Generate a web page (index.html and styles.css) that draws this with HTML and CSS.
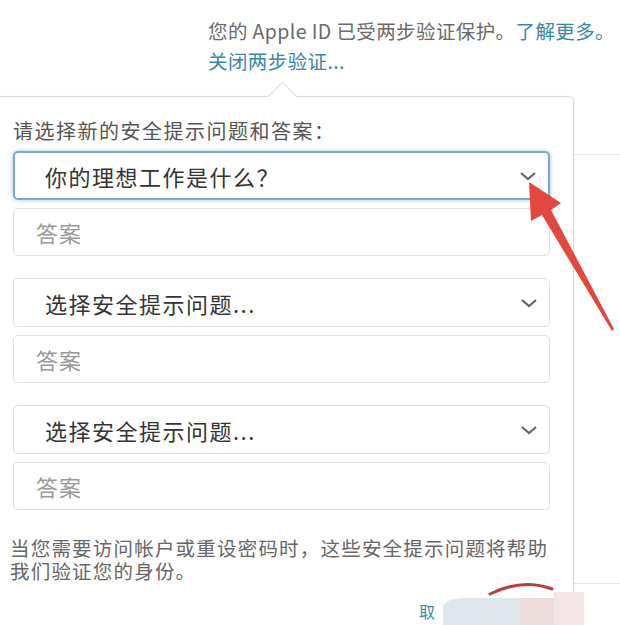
FILE: index.html
```html
<!DOCTYPE HTML>
<html>
<head>
  <title>Apple ID 安全提示问题</title>
  <meta name="viewport" content="width=device-width, initial-scale=1">
  <link rel="stylesheet" href="styles.css">
</head>
<body>
  <div class="page">
    <div class="intro">
      <p>您的 Apple ID 已受两步验证保护。<a href="#">了解更多。</a></p>
      <p><a href="#">关闭两步验证...</a></p>
    </div>

    <div class="layout">
      <div class="popover">
        <h3 class="popover-title">请选择新的安全提示问题和答案：</h3>

        <div class="question-group">
          <div class="select focused">
            <span>你的理想工作是什么？</span>
            <svg class="chevron" viewBox="0 0 18 10"><path d="M2 2l7 6 7-6"/></svg>
          </div>
          <div class="answer">答案</div>
        </div>

        <div class="question-group">
          <div class="select">
            <span>选择安全提示问题...</span>
            <svg class="chevron" viewBox="0 0 18 10"><path d="M2 2l7 6 7-6"/></svg>
          </div>
          <div class="answer">答案</div>
        </div>

        <div class="question-group">
          <div class="select">
            <span>选择安全提示问题...</span>
            <svg class="chevron" viewBox="0 0 18 10"><path d="M2 2l7 6 7-6"/></svg>
          </div>
          <div class="answer">答案</div>
        </div>

        <p class="hint">当您需要访问帐户或重设密码时，这些安全提示问题将帮助我们验证您的身份。</p>

        <div class="actions">
          <a href="#" class="cancel">取</a>
        </div>
      </div>
      <div class="aside"></div>
    </div>

    <!-- annotation arrow drawn over the screenshot -->
    <svg class="arrow" width="620" height="625" viewBox="0 0 620 625">
      <polygon points="529,182 561,203 551,210 614,329 612,331 542,215 531,221"/>
    </svg>

    <!-- blurred watermark at the bottom -->
    <svg class="smudge" width="620" height="625" viewBox="0 0 620 625">
      <path d="M443 625 L443 606 Q446 599 462 598 L522 598 L522 625 Z" fill="#dfe7eb"/>
      <rect x="520" y="598" width="34" height="27" fill="#eddcdc"/>
      <rect x="554" y="592" width="30" height="33" fill="#f4e6e6"/>
      <path d="M490 594 Q522 578 552 589" fill="none" stroke="#b8403c" stroke-width="3" stroke-linecap="round"/>
    </svg>
  </div>
</body>
</html>
```

FILE: styles.css
```css
body {
  margin: 0;
  background: #fff;
  font-family: "Noto Sans CJK SC", "Noto Sans", sans-serif;
  overflow: hidden;
}
.page {
  position: relative;
  width: 620px;
  height: 625px;
  overflow: hidden;
}
.intro {
  padding: 16px 0 0 208px;
  font-size: 19.5px;
  line-height: 30px;
  letter-spacing: 0.4px;
  color: #6a6a6a;
}
.intro p { margin: 0; white-space: nowrap; }
.intro a { color: #3b86ab; text-decoration: none; }

.layout {
  display: flex;
  margin-top: 20px;
}
.popover {
  position: relative;
  box-sizing: border-box;
  width: 584px;
  height: 560px;
  margin-left: -10px;
  padding: 22px 24px 0 22px;
  background: #fff;
  border: 1px solid #dadada;
  border-radius: 6px;
  box-shadow: 0 1px 4px rgba(0, 0, 0, 0.06);
}
.popover::before { /* the pointer up to the link */
  content: "";
  position: absolute;
  top: -11px;
  left: 281px;
  width: 20px;
  height: 20px;
  background: #fff;
  border-top: 1px solid #dadada;
  border-left: 1px solid #dadada;
  transform: rotate(45deg);
}
.popover-title {
  margin: 0 0 8px;
  font-size: 20px;
  font-weight: normal;
  line-height: 24px;
  letter-spacing: 1.5px;
  color: #555;
  white-space: nowrap;
}
.question-group {
  display: flex;
  flex-direction: column;
  gap: 8px;
  margin-bottom: 22px;
}
.select, .answer {
  box-sizing: border-box;
  display: flex;
  align-items: center;
  width: 537px;
  background: #fff;
  border: 1px solid #dedede;
  border-radius: 5px;
  font-size: 22px;
}
.select {
  height: 49px;
  padding: 0 11px 0 31px;
  justify-content: space-between;
  letter-spacing: 1.5px;
  color: #333;
}
.select.focused {
  border: 2px solid #7aaac6;
  padding-left: 30px;
  box-shadow: 0 0 4px rgba(90, 150, 190, 0.55);
}
.answer {
  height: 48px;
  padding-left: 22px;
  letter-spacing: 1px;
  color: #999;
}
.chevron {
  width: 18px;
  height: 10px;
  fill: none;
  stroke: #666;
  stroke-width: 2.2;
}
.hint {
  margin: 26px 0 0 -3px;
  width: 542px;
  font-size: 19.5px;
  line-height: 23px;
  color: #666;
  letter-spacing: 1.2px;
}
.actions {
  display: flex;
  padding: 17px 0 0 406px;
}
.cancel {
  font-size: 16px;
  color: #3b86ab;
  text-decoration: none;
}
.aside {
  flex: 1;
  height: 428px;
  margin-top: 58px;
  border-top: 1px solid #e6e6e6;
  border-bottom: 1px solid #e6e6e6;
}
.arrow, .smudge {
  position: absolute;
  top: 0;
  left: 0;
  pointer-events: none;
}
.arrow polygon { fill: #e2483d; }
```
